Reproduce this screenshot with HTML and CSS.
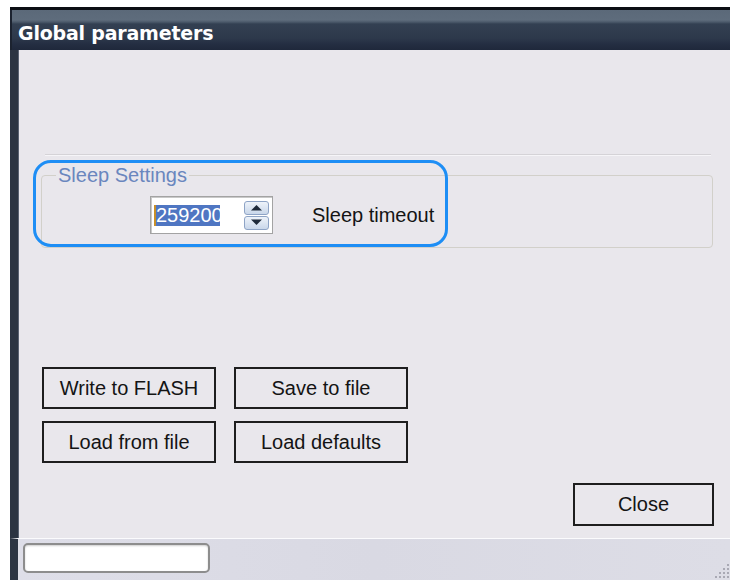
FILE: index.html
```html
<!DOCTYPE html>
<html lang="en">
<head>
<meta charset="utf-8">
<title>Global parameters</title>
<link rel="stylesheet" href="styles.css">
</head>
<body>
<div class="window">
  <div class="titlebar">Global parameters</div>
  <div class="client">
    <div class="rule"></div>
    <fieldset class="group">
      <legend>Sleep Settings</legend>
      <div class="row">
        <div class="spinbox">
          <span class="caret"></span><span class="value">259200</span>
          <div class="spin">
            <span class="spin-btn"><svg width="13" height="7" viewBox="0 0 13 7"><path d="M1 6.5 L6.5 1 L12 6.5 Z" fill="#1e2a3a"/></svg></span>
            <span class="spin-btn"><svg width="13" height="7" viewBox="0 0 13 7"><path d="M1 0.5 L6.5 6 L12 0.5 Z" fill="#1e2a3a"/></svg></span>
          </div>
        </div>
        <span class="label">Sleep timeout</span>
      </div>
    </fieldset>
    <div class="buttons">
      <button class="btn">Write to FLASH</button>
      <button class="btn">Save to file</button>
      <button class="btn">Load from file</button>
      <button class="btn">Load defaults</button>
    </div>
    <div class="footer">
      <button class="btn close">Close</button>
    </div>
    <div class="focus-ring"></div>
  </div>
  <div class="statusbar">
    <div class="status-field"></div>
    <svg class="grip" width="16" height="16" viewBox="0 0 16 16">
      <g fill="#a9a9b4">
        <rect x="13" y="1" width="2" height="2"/>
        <rect x="9" y="5" width="2" height="2"/><rect x="13" y="5" width="2" height="2"/>
        <rect x="5" y="9" width="2" height="2"/><rect x="9" y="9" width="2" height="2"/><rect x="13" y="9" width="2" height="2"/>
        <rect x="1" y="13" width="2" height="2"/><rect x="5" y="13" width="2" height="2"/><rect x="9" y="13" width="2" height="2"/><rect x="13" y="13" width="2" height="2"/>
      </g>
    </svg>
  </div>
</div>
</body>
</html>
```
FILE: styles.css
```css
* { box-sizing: border-box; }

html, body {
  margin: 0;
  background: #ffffff;
}

body {
  font-family: "Liberation Sans", Arial, sans-serif;
  color: #141414;
}

.window {
  margin: 7px 0 0 10px;
  width: 720px;
  height: 573px;
  border-top: 3px solid #0c0f14;
  display: flex;
  flex-direction: column;
}

.titlebar {
  height: 40px;
  flex: none;
  padding: 5px 0 0 6px;
  display: flex;
  align-items: center;
  color: #ffffff;
  font-family: "DejaVu Sans", sans-serif;
  font-weight: bold;
  font-size: 19px;
  letter-spacing: -0.2px;
  background: linear-gradient(to bottom,
    #5b6979 0px, #5e6c7c 10px, #4c5a6b 12px,
    #334052 14px, #2d394b 28px, #242e42 34px, #1f283b 40px);
  border-left: 2px solid #1c2330;
}

.client {
  position: relative;
  flex: 1;
  background: #e9e7ec;
  border-left: 8px solid #2c3442;
  box-shadow: inset 1px 0 0 #5a6272;
  padding-top: 104px;
}

.rule {
  height: 2px;
  margin: 0 19px 0 27px;
  border-top: 1px solid #d5d3d7;
  border-bottom: 1px solid #f6f5f8;
}

.group {
  margin: 9px 17px 0 23px;
  padding: 11px 0 13px 0;
  border: 1px solid #d2d0ca;
  border-radius: 4px;
  min-width: 0;
}

.group legend {
  margin-left: 14px;
  padding: 0 2px;
  font-size: 20px;
  line-height: 20px;
  color: #6a86be;
}

.row {
  display: flex;
  align-items: center;
  margin-left: 108px;
  gap: 39px;
}

.spinbox {
  width: 123px;
  height: 38px;
  background: #ffffff;
  border: 1px solid #a3a3a3;
  box-shadow: inset 1px 1px 0 #c9c9c9;
  display: flex;
  align-items: center;
  padding-left: 3px;
}

.caret {
  width: 2px;
  height: 21px;
  background: #c8902a;
}

.value {
  width: 64px;
  height: 21px;
  overflow: hidden;
  white-space: nowrap;
  background: #4f76c2;
  color: #ffffff;
  font-size: 20px;
  line-height: 21px;
}

.spin {
  margin-left: auto;
  margin-right: 3px;
  display: flex;
  flex-direction: column;
  gap: 1px;
}

.spin-btn {
  width: 25px;
  height: 14px;
  border: 1px solid #8ea4c6;
  border-radius: 3px;
  background: linear-gradient(to bottom, #eef3fa, #c9d7ea);
  display: flex;
  align-items: center;
  justify-content: center;
}

.label {
  font-size: 20px;
  color: #141414;
}

.buttons {
  margin: 119px 0 0 24px;
  display: grid;
  grid-template-columns: 174px 174px;
  column-gap: 18px;
  row-gap: 12px;
}

.btn {
  height: 42px;
  border: 2px solid #1e1e1e;
  background: transparent;
  font-family: "Liberation Sans", Arial, sans-serif;
  font-size: 20px;
  color: #141414;
  padding: 0;
}

.footer {
  display: flex;
  justify-content: flex-end;
  margin: 20px 16px 0 0;
}

.close {
  width: 141px;
  height: 43px;
}

.focus-ring {
  position: absolute;
  left: 15px;
  top: 110px;
  width: 415px;
  height: 87px;
  border: 3px solid #1e8ef5;
  border-radius: 18px;
  pointer-events: none;
}

.statusbar {
  height: 42px;
  flex: none;
  border-left: 8px solid #2c3442;
  border-top: 1px solid #fbfbfd;
  background: linear-gradient(to right, #dedee8, #d9d9e3 50%, #dddde6);
  display: flex;
  align-items: flex-start;
  padding: 4px 0 0 5px;
  position: relative;
}

.status-field {
  width: 187px;
  height: 30px;
  background: #ffffff;
  border: 2px solid #8d8d8d;
  border-radius: 5px;
  box-shadow: inset 0 1px 2px #cfcfcf;
}

.grip {
  margin-left: auto;
  align-self: flex-end;
  margin-bottom: 1px;
}
```
